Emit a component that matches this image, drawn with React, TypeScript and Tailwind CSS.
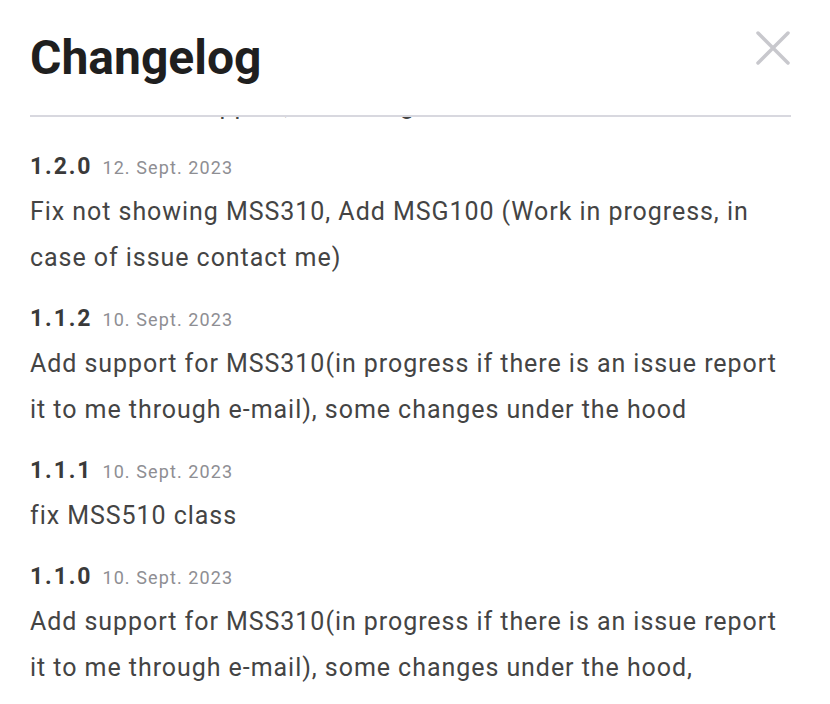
import React from "react";

const entries = [
  {
    v: "1.2.0",
    d: "12. Sept. 2023",
    t: "Fix not showing MSS310, Add MSG100 (Work in progress, in case of issue contact me)",
  },
  {
    v: "1.1.2",
    d: "10. Sept. 2023",
    t: "Add support for MSS310(in progress if there is an issue report it to me through e-mail), some changes under the hood",
  },
  { v: "1.1.1", d: "10. Sept. 2023", t: "fix MSS510 class" },
  {
    v: "1.1.0",
    d: "10. Sept. 2023",
    t: "Add support for MSS310(in progress if there is an issue report it to me through e-mail), some changes under the hood,",
  },
];

export default function App() {
  return (
    <div
      className="w-[830px] h-[704px] bg-white overflow-hidden flex flex-col pl-[30px] pr-[39px]"
      style={{ fontFamily: "Roboto, 'Noto Sans', sans-serif" }}
    >
      <div className="flex items-start justify-between pt-[26px] h-[115px] shrink-0">
        <h1 className="text-[48px] leading-[64px] font-bold text-[#1f1f1f]">Changelog</h1>
        <button className="mt-[4px] w-[36px] h-[36px] flex items-center justify-center">
          <svg width="36" height="36" viewBox="0 0 36 36" fill="none">
            <path d="M3 3 L33 33 M33 3 L3 33" stroke="#c8c8cd" strokeWidth="3.5" strokeLinecap="round" />
          </svg>
        </button>
      </div>
      <div className="h-[2px] bg-[#d8d8df] shrink-0" />
      <div className="flex-1 overflow-hidden">
        <div className="mt-[-34px] flex flex-col gap-[22px]">
          <p className="text-[25px] leading-[46px] tracking-[0.95px] text-[#444]">
            Add MSS210 support, some bug fixes
          </p>
          {entries.map((e) => (
            <div key={e.v} className="flex flex-col">
              <div className="flex items-baseline gap-[10px] h-[32px] leading-[32px]">
                <span className="text-[23px] font-bold tracking-[1.9px] text-[#3a3a3a]">{e.v}</span>
                <span className="text-[18px] tracking-[1.1px] text-[#8e8e93]">{e.d}</span>
              </div>
              <p className="mt-[6px] text-[25px] leading-[46px] tracking-[0.95px] text-[#444]">{e.t}</p>
            </div>
          ))}
        </div>
      </div>
    </div>
  );
}
